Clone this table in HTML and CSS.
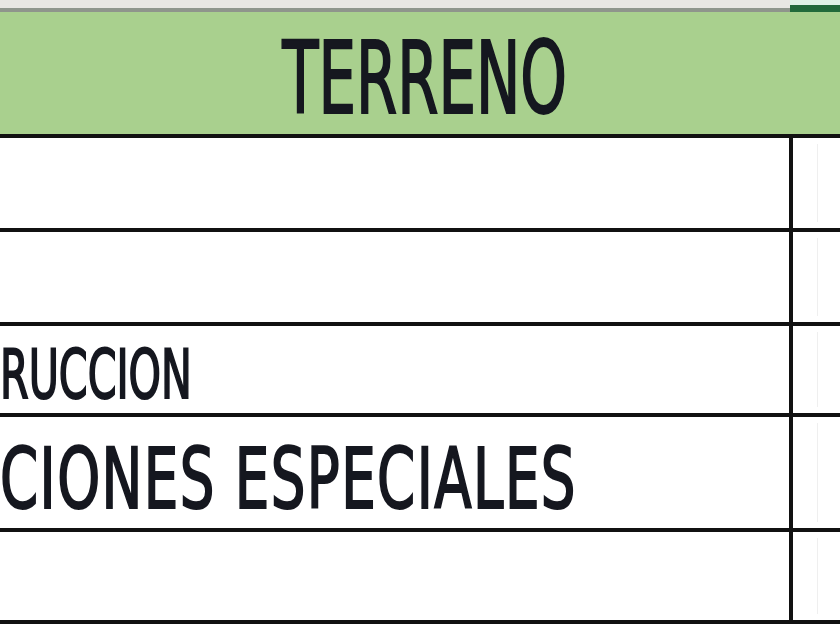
FILE: index.html
```html
<!DOCTYPE html>
<html lang="es">
<head>
<meta charset="utf-8">
<title>Terreno</title>
<link rel="stylesheet" href="styles.css">
</head>
<body>
<div class="top">
  <div class="top-left"></div>
  <div class="top-right"></div>
</div>
<div class="header"><span class="txt txt-head">TERRENO</span></div>
<div class="row row-1"><div class="cell-main"></div><div class="cell-side"><div class="grid-line"></div></div></div>
<div class="row row-2"><div class="cell-main"></div><div class="cell-side"><div class="grid-line"></div></div></div>
<div class="row row-3"><div class="cell-main"><span class="txt txt-small">RUCCION</span></div><div class="cell-side"><div class="grid-line"></div></div></div>
<div class="row row-4"><div class="cell-main"><span class="txt txt-large">CIONES ESPECIALES</span></div><div class="cell-side"><div class="grid-line"></div></div></div>
<div class="row row-5"><div class="cell-main"></div><div class="cell-side"><div class="grid-line"></div></div></div>
</body>
</html>
```
FILE: styles.css
```css
html, body {
  margin: 0;
  padding: 0;
  background: #ffffff;
}
body {
  width: 840px;
  height: 630px;
  overflow: hidden;
  font-family: "DejaVu Sans Condensed", "DejaVu Sans", sans-serif;
  font-stretch: condensed;
  font-weight: normal;
  color: #15171f;
}
.top {
  display: flex;
  height: 12px;
}
.top-left {
  width: 790px;
  background: #e8e6e3;
  border-bottom: 4px solid #8f958c;
  box-sizing: border-box;
}
.top-right {
  flex: 1;
  background: #dff3e7;
  border-bottom: 7px solid #226a3b;
  box-sizing: border-box;
}
.header {
  height: 122px;
  background: #a9d08e;
  border-bottom: 4px solid #111111;
  box-sizing: content-box;
  padding-left: 10px;
  text-align: center;
}
.txt {
  display: inline-block;
  line-height: 1;
  white-space: nowrap;
  -webkit-text-stroke: 2px currentColor;
}
.txt-head {
  font-size: 99px;
  margin-top: 17px;
  transform: scaleX(0.666);
  transform-origin: center top;
}
.row {
  display: flex;
  border-bottom: 4px solid #111111;
}
.row-1 { height: 90px; }
.row-2 { height: 90px; }
.row-3 { height: 87px; }
.row-4 { height: 111px; }
.row-5 { height: 88px; }
.cell-main {
  width: 793px;
  border-right: 4px solid #111111;
  box-sizing: border-box;
  overflow: hidden;
}
.cell-side {
  flex: 1;
  padding: 6px 0;
  box-sizing: border-box;
}
.grid-line {
  width: 24px;
  height: 100%;
  border-right: 1px solid #efefef;
}
.txt-small {
  font-size: 68px;
  margin-top: 15px;
  transform: scaleX(0.674);
  transform-origin: left top;
}
.txt-large {
  font-size: 83px;
  margin-top: 21px;
  letter-spacing: 2px;
  transform: scaleX(0.731);
  transform-origin: left top;
}
```
